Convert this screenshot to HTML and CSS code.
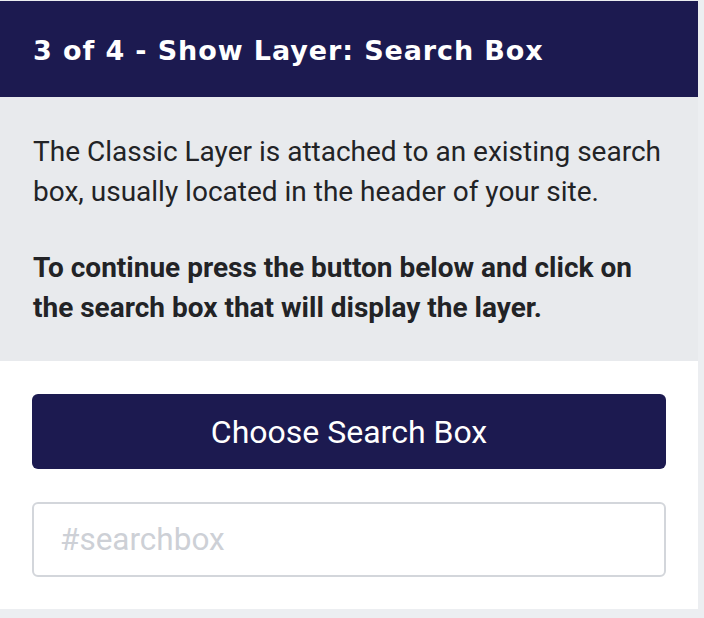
FILE: index.html
```html
<!DOCTYPE html>
<html lang="en">
<head>
  <meta charset="UTF-8" />
  <meta name="viewport" content="width=device-width, initial-scale=1.0"/>
  <title>Show Layer</title>
  <link rel="stylesheet" href="styles.css">
</head>
<body>
<div class="panel">
  <div class="step-header">
    <h2>3 of 4 - Show Layer: Search Box</h2>
  </div>

  <div class="step-info">
    <p>The Classic Layer is attached to an existing search box, usually located in the header of your site.</p>
    <p class="strong">To continue press the button below and click on the search box that will display the layer.</p>
  </div>

  <div class="step-actions">
    <button type="button" class="choose-btn">Choose Search Box</button>
    <input type="text" class="selector-input" placeholder="#searchbox" />
  </div>
</div>
</body>
</html>
```

FILE: styles.css
```css
body {
  margin: 0;
  padding: 1px 0 0 0;
  background-color: #eceef1;
  font-family: Roboto, 'Noto Sans', sans-serif;
  height: 100vh;
  box-sizing: border-box;
}

.panel {
  width: 698px;
  background: #fff;
}

.step-header {
  background-color: #1c1a50;
  height: 96px;
  padding: 0 33px;
  display: flex;
  align-items: center;
}

.step-header h2 {
  margin: 2px 0 0 0;
  color: #fff;
  font-family: 'DejaVu Sans', sans-serif;
  font-weight: bold;
  font-size: 27px;
  letter-spacing: 0.9px;
}

.step-info {
  background-color: #e8eaed;
  padding: 35px 33px 33px;
}

.step-info p {
  margin: 0;
  font-size: 28px;
  line-height: 40px;
  color: #222326;
}

.step-info p.strong {
  font-weight: bold;
  margin-top: 36px;
}

.step-actions {
  padding: 33px 32px 32px 32px;
  display: flex;
  flex-direction: column;
  gap: 33px;
}

.choose-btn {
  height: 75px;
  background: #1c1a50;
  color: #fff;
  border: none;
  border-radius: 6px;
  font-family: Roboto, sans-serif;
  font-size: 32px;
  cursor: pointer;
}

.selector-input {
  height: 75px;
  box-sizing: border-box;
  border: 2px solid #d3d6db;
  border-radius: 6px;
  padding: 0 26px;
  font-family: Roboto, sans-serif;
  font-size: 31.5px;
  color: #222;
}

.selector-input::placeholder {
  color: #cdd0d6;
}
```
